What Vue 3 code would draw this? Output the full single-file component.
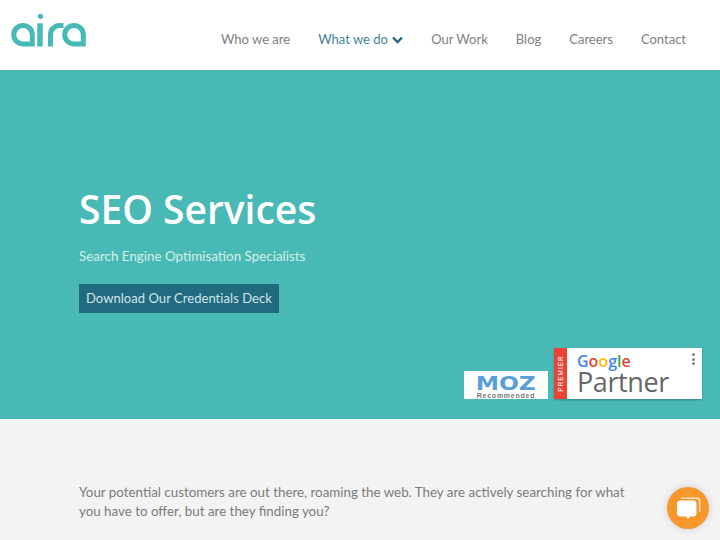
<template>
  <div class="page">
    <header class="site-header">
      <svg class="logo" width="80" height="36" viewBox="11 13 80 36" fill="none" stroke="#48b9b5" stroke-width="5">
        <path d="M34.8 44 H23 A9.3 9.3 0 1 1 32.3 34.7 V46.5" />
        <circle cx="40.5" cy="16.3" r="2.6" fill="#48b9b5" stroke="none" />
        <path d="M40 23.3 V46.5" stroke-width="5.5" />
        <path d="M50.5 46.5 V34.5 A9 9 0 0 1 59.5 25.5 H63.5" />
        <path d="M85.8 44 H74 A9.3 9.3 0 1 1 83.3 34.7 V46.5" />
      </svg>
      <nav class="nav">
        <a v-for="item in navItems" :key="item.label" class="nav-link" :class="{ active: item.active }">
          {{ item.label }}
          <svg v-if="item.active" class="chevron" width="11" height="8" viewBox="0 0 11 8" fill="none" stroke="#23687f" stroke-width="2.4">
            <path d="M1 1.5 L5.5 6 L10 1.5" />
          </svg>
        </a>
      </nav>
    </header>

    <section class="hero">
      <h1>SEO Services</h1>
      <p class="subtitle">Search Engine Optimisation Specialists</p>
      <a class="cta">Download Our Credentials Deck</a>

      <div class="badges">
        <div class="moz">
          <span class="moz-name">MOZ</span>
          <span class="moz-sub">Recommended</span>
        </div>
        <div class="partner">
          <div class="premier"><span>PREMIER</span></div>
          <div class="partner-body">
            <div class="google">
              <span class="blue">G</span><span class="red">o</span><span class="yellow">o</span><span class="blue">g</span><span class="green">l</span><span class="red">e</span>
            </div>
            <div class="partner-word">Partner</div>
            <div class="dots"><i></i><i></i><i></i></div>
          </div>
        </div>
      </div>
    </section>

    <section class="intro">
      <p>Your potential customers are out there, roaming the web. They are actively searching for what you have to offer, but are they finding you?</p>
    </section>

    <button class="chat">
      <svg width="26" height="26" viewBox="0 0 26 26">
        <path d="M7 2.5 H22 A3.5 3.5 0 0 1 25.5 6 V17 H24 V6.5 A2.5 2.5 0 0 0 21.5 4 H5.5 A3 3 0 0 1 7 2.5 Z" fill="#fff" opacity="0.75" />
        <path d="M5.5 5.5 H18 A3.5 3.5 0 0 1 21.5 9 V18 A3.5 3.5 0 0 1 18 21.5 H15 L13 24 L11 21.5 H5.5 A3.5 3.5 0 0 1 2 18 V9 A3.5 3.5 0 0 1 5.5 5.5 Z" fill="#fff" />
      </svg>
    </button>
  </div>
</template>

<script setup>
const navItems = [
  { label: 'Who we are' },
  { label: 'What we do', active: true },
  { label: 'Our Work' },
  { label: 'Blog' },
  { label: 'Careers' },
  { label: 'Contact' }
]
</script>

<style>
html, body {
  margin: 0;
  background: #f3f3f3;
  overflow: hidden;
}
</style>

<style scoped>
.page {
  height: 540px;
  overflow: hidden;
  position: relative;
  font-family: Lato, "Open Sans", sans-serif;
  color: #6f6f6f;
}

.site-header {
  height: 70px;
  background: #fff;
  display: flex;
  justify-content: space-between;
  box-sizing: border-box;
  padding: 13px 34px 0 11px;
}

.logo {
  display: block;
}

.nav {
  display: flex;
  gap: 28px;
  padding-top: 18px;
  font-size: 13px;
  line-height: 17px;
}

.nav-link {
  color: #808080;
}

.nav-link.active {
  color: #3f8298;
}

.chevron {
  margin-left: 1px;
}

.hero {
  position: relative;
  height: 349px;
  box-sizing: border-box;
  background: #48b9b5;
  padding: 115px 79px 0;
  color: #fff;
}

.hero h1 {
  margin: 0;
  font-family: "Open Sans", sans-serif;
  font-size: 39px;
  line-height: 48px;
  font-weight: 600;
}

.subtitle {
  margin: 15px 0 0;
  font-size: 13.4px;
  line-height: 17px;
  color: #d5f0ee;
}

.cta {
  display: inline-block;
  margin-top: 19px;
  background: #226a80;
  color: #cfe6ea;
  font-size: 13px;
  line-height: 29px;
  padding: 0 7px;
  letter-spacing: 0.05px;
}

.badges {
  position: absolute;
  right: 18px;
  top: 278px;
  display: flex;
  align-items: flex-end;
  gap: 6px;
}

.moz {
  width: 84px;
  height: 28px;
  background: #fff;
  display: flex;
  flex-direction: column;
  align-items: center;
  font-weight: 700;
}

.moz-name {
  font-family: "DejaVu Sans", sans-serif;
  font-size: 20px;
  line-height: 18px;
  margin-top: 3px;
  color: #5a9fd8;
  transform: scaleX(1.17);
}

.moz-sub {
  font-family: "Liberation Sans", sans-serif;
  font-size: 7px;
  line-height: 7px;
  letter-spacing: 0.75px;
  color: #777;
}

.partner {
  width: 148px;
  height: 51px;
  display: flex;
  background: #fff;
  box-shadow: 0 1px 2px rgba(0, 0, 0, 0.25);
}

.premier {
  width: 13px;
  background: #ea4335;
  display: flex;
  align-items: center;
  justify-content: center;
  color: #fff;
  font-family: "Liberation Sans", sans-serif;
  font-size: 6.5px;
  letter-spacing: 1px;
}

.premier span {
  transform: rotate(-90deg);
}

.partner-body {
  position: relative;
  flex: 1;
  padding: 5px 0 0 10px;
  font-family: "Open Sans", sans-serif;
}

.google {
  font-size: 16px;
  line-height: 17px;
  font-weight: 600;
}

.blue { color: #4285f4; }
.red { color: #ea4335; }
.yellow { color: #fbbc05; }
.green { color: #34a853; }

.partner-word {
  font-size: 27px;
  line-height: 24px;
  letter-spacing: -0.4px;
  color: #666;
}

.dots {
  position: absolute;
  top: 5px;
  right: 7px;
  display: flex;
  flex-direction: column;
  gap: 1.5px;
}

.dots i {
  width: 3px;
  height: 3px;
  border-radius: 50%;
  background: #80868b;
}

.intro {
  padding: 64px 79px 0;
}

.intro p {
  margin: 0;
  width: 560px;
  font-size: 13.35px;
  line-height: 19px;
  color: #7b7b7b;
}

.chat {
  position: absolute;
  left: 667px;
  top: 487px;
  width: 42px;
  height: 42px;
  border: none;
  border-radius: 50%;
  padding: 0;
  background: #f7972a;
  box-shadow: 0 0 8px rgba(0, 0, 0, 0.15);
  display: flex;
  align-items: center;
  justify-content: center;
}
</style>
